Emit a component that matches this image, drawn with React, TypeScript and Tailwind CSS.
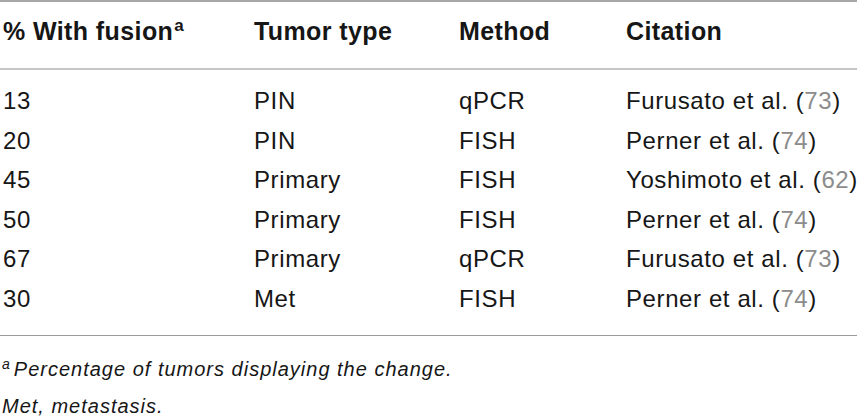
const rows = [
    { pct: '13', tumor: 'PIN', method: 'qPCR', author: 'Furusato et al.', ref: '73' },
    { pct: '20', tumor: 'PIN', method: 'FISH', author: 'Perner et al.', ref: '74' },
    { pct: '45', tumor: 'Primary', method: 'FISH', author: 'Yoshimoto et al.', ref: '62' },
    { pct: '50', tumor: 'Primary', method: 'FISH', author: 'Perner et al.', ref: '74' },
    { pct: '67', tumor: 'Primary', method: 'qPCR', author: 'Furusato et al.', ref: '73' },
    { pct: '30', tumor: 'Met', method: 'FISH', author: 'Perner et al.', ref: '74' },
];

const cols = 'grid grid-cols-[251px_205px_167px_1fr]';

const App = () => {
    return (
        <div className="w-[857px] h-[420px] bg-white text-[#161616] font-['Liberation_Sans',Arial,sans-serif]">
            {/* Top rule */}
            <div className="h-[2px] bg-[#a8a8a8]" />

            {/* Header */}
            <div className={`${cols} pt-[9px] pb-[17px] pl-[3px] text-[25px] leading-[40px] font-bold tracking-[0.4px]`}>
                <div className="whitespace-nowrap">
                    % With fusion<sup className="text-[17px] font-bold relative -top-[9px] ml-[1px]">a</sup>
                </div>
                <div>Tumor type</div>
                <div>Method</div>
                <div>Citation</div>
            </div>
            <div className="h-[2px] bg-[#c6c6c6]" />

            {/* Body rows */}
            <div className="pt-[11px] pb-[17px] pl-[3px] text-[24px] leading-[39.5px] tracking-[0.6px]">
                {rows.map((r, i) => (
                    <div key={i} className={cols}>
                        <div>{r.pct}</div>
                        <div>{r.tumor}</div>
                        <div>{r.method}</div>
                        <div className="whitespace-nowrap">
                            {r.author} (<span className="text-[#8c8c8c]">{r.ref}</span>)
                        </div>
                    </div>
                ))}
            </div>
            <div className="h-[1px] bg-[#9a9a9a]" />

            {/* Footnotes */}
            <div className="pt-[15px] pl-[2px] text-[20px] leading-[37px] italic tracking-[1px]">
                <div className="whitespace-nowrap">
                    <sup className="text-[14px] relative -top-[7px] mr-[3px]">a</sup>Percentage of tumors displaying the change.
                </div>
                <div>Met, metastasis.</div>
            </div>
        </div>
    );
};

export default App;
